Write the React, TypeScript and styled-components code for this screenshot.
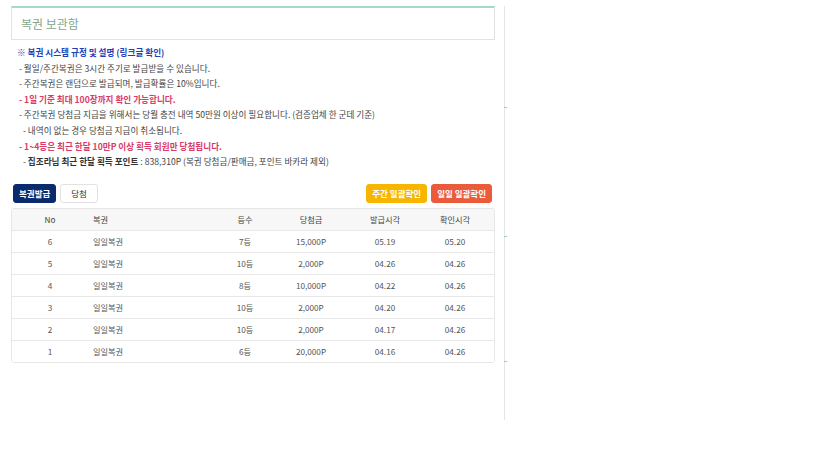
import React from 'react';
import styled, { createGlobalStyle } from 'styled-components';

const GlobalStyle = createGlobalStyle`
  html, body {
    margin: 0;
    padding: 0;
    background: #fff;
  }
  body {
    font-family: "Noto Sans CJK KR", "Noto Sans", sans-serif;
    color: #333;
  }
`;

const Page = styled.div`
  display: flex;
  align-items: flex-start;
  padding: 6px 0 0 11px;
  height: 451px;
`;

const Main = styled.div`
  width: 484px;
  display: flex;
  flex-direction: column;
`;

const Divider = styled.div`
  width: 1px;
  height: 414px;
  margin-left: 9px;
  background: #e4e6e6;
  position: relative;
`;

const Tick = styled.span<{ $top: number }>`
  position: absolute;
  left: 0;
  top: ${(p) => p.$top}px;
  width: 3px;
  height: 1px;
  background: #9fc9bb;
`;

const TitleBox = styled.div`
  height: 31px;
  border: 1px solid #e3e3e3;
  border-top: 2px solid #a9d8c5;
  display: flex;
  align-items: center;
  padding-left: 9px;
  font-size: 12px;
  color: #86a68c;
`;

const Notice = styled.div`
  padding: 5px 0 0 5px;
  display: flex;
  flex-direction: column;
`;

const NoticeLine = styled.div<{ $tone?: 'blue' | 'red' | 'plain'; $indent?: boolean }>`
  height: 15.6px;
  line-height: 15.6px;
  font-size: 8.6px;
  white-space: nowrap;
  padding-left: ${(p) => (p.$indent ? '5px' : '1px')};
  font-weight: ${(p) => (p.$tone === 'blue' || p.$tone === 'red' ? 700 : 400)};
  color: ${(p) => (p.$tone === 'blue' ? '#1f3fb8' : p.$tone === 'red' ? '#d93a68' : '#444')};
`;

const Strong = styled.b`
  font-weight: 700;
  color: #333;
`;

const Toolbar = styled.div`
  display: flex;
  align-items: center;
  margin-top: 14px;
  padding: 0 3px 0 2px;
  height: 19px;
`;

const Spacer = styled.div`
  flex: 1;
`;

const Btn = styled.button<{ $variant: 'navy' | 'plain' | 'yellow' | 'red' }>`
  height: 19px;
  padding: 0 ${(p) => (p.$variant === 'plain' ? '10px' : '5px')};
  margin-right: 4px;
  border-radius: 3px;
  font-family: inherit;
  font-size: 8.5px;
  font-weight: ${(p) => (p.$variant === 'plain' ? 400 : 700)};
  border: 1px solid
    ${(p) =>
      p.$variant === 'navy' ? '#0b2a6e' : p.$variant === 'yellow' ? '#f7b500' : p.$variant === 'red' ? '#ea5b3c' : '#e2e2e2'};
  background: ${(p) =>
    p.$variant === 'navy' ? '#0b2a6e' : p.$variant === 'yellow' ? '#f7b500' : p.$variant === 'red' ? '#ea5b3c' : '#fff'};
  color: ${(p) => (p.$variant === 'plain' ? '#333' : '#fff')};
  &:last-child {
    margin-right: 0;
  }
`;

const Table = styled.div`
  margin-top: 5px;
  border: 1px solid #e6e6e6;
  border-radius: 3px;
  overflow: hidden;
`;

const Row = styled.div<{ $head?: boolean }>`
  display: grid;
  grid-template-columns: 76px 127px 60px 72px 76px 64px 1fr;
  height: 21px;
  align-items: center;
  font-size: 8.2px;
  color: ${(p) => (p.$head ? '#444' : '#555')};
  background: ${(p) => (p.$head ? '#f7f7f7' : '#fff')};
  border-top: ${(p) => (p.$head ? 'none' : '1px solid #e8e8e8')};
`;

const Cell = styled.div<{ $align?: 'left' | 'center' }>`
  text-align: ${(p) => (p.$align === 'left' ? 'left' : 'center')};
  padding-left: ${(p) => (p.$align === 'left' ? '5px' : '0')};
  white-space: nowrap;
`;

const rows = [
  { no: 6, name: '일일복권', rank: '7등', prize: '15,000P', issued: '05.19', checked: '05.20' },
  { no: 5, name: '일일복권', rank: '10등', prize: '2,000P', issued: '04.26', checked: '04.26' },
  { no: 4, name: '일일복권', rank: '8등', prize: '10,000P', issued: '04.22', checked: '04.26' },
  { no: 3, name: '일일복권', rank: '10등', prize: '2,000P', issued: '04.20', checked: '04.26' },
  { no: 2, name: '일일복권', rank: '10등', prize: '2,000P', issued: '04.17', checked: '04.26' },
  { no: 1, name: '일일복권', rank: '6등', prize: '20,000P', issued: '04.16', checked: '04.26' },
];

const TableRow = ({ r }: { r: (typeof rows)[number] }) => (
  <Row>
    <Cell>{r.no}</Cell>
    <Cell $align="left">{r.name}</Cell>
    <Cell>{r.rank}</Cell>
    <Cell>{r.prize}</Cell>
    <Cell>{r.issued}</Cell>
    <Cell>{r.checked}</Cell>
    <Cell />
  </Row>
);

const App = () => {
  return (
    <>
      <GlobalStyle />
      <Page>
        <Main>
          <TitleBox>복권 보관함</TitleBox>

          <Notice>
            <NoticeLine $tone="blue">※ 복권 시스템 규정 및 설명 (링크글 확인)</NoticeLine>
            <NoticeLine>&nbsp;- 월일/주간복권은 3시간 주기로 발급받을 수 있습니다.</NoticeLine>
            <NoticeLine>&nbsp;- 주간복권은 랜덤으로 발급되며, 발급확률은 10%입니다.</NoticeLine>
            <NoticeLine $tone="red">&nbsp;- 1일 기준 최대 100장까지 확인 가능합니다.</NoticeLine>
            <NoticeLine>&nbsp;- 주간복권 당첨금 지급을 위해서는 당월 충전 내역 50만원 이상이 필요합니다. (검증업체 한 군데 기준)</NoticeLine>
            <NoticeLine $indent>&nbsp;- 내역이 없는 경우 당첨금 지급이 취소됩니다.</NoticeLine>
            <NoticeLine $tone="red">&nbsp;- 1~4등은 최근 한달 10만P 이상 획득 회원만 당첨됩니다.</NoticeLine>
            <NoticeLine $indent>
              &nbsp;- <Strong>집조라님 최근 한달 획득 포인트</Strong> : 838,310P (복권 당첨금/판매금, 포인트 바카라 제외)
            </NoticeLine>
          </Notice>

          <Toolbar>
            <Btn $variant="navy">복권발급</Btn>
            <Btn $variant="plain">당첨</Btn>
            <Spacer />
            <Btn $variant="yellow">주간 일괄확인</Btn>
            <Btn $variant="red">일일 일괄확인</Btn>
          </Toolbar>

          <Table>
            <Row $head>
              <Cell>No</Cell>
              <Cell $align="left">복권</Cell>
              <Cell>등수</Cell>
              <Cell>당첨금</Cell>
              <Cell>발급시각</Cell>
              <Cell>확인시각</Cell>
              <Cell />
            </Row>
            {rows.map((r) => (
              <TableRow key={r.no} r={r} />
            ))}
          </Table>
        </Main>
        <Divider>
          <Tick $top={101} />
          <Tick $top={230} />
          <Tick $top={355} />
        </Divider>
      </Page>
    </>
  );
};

export default App;
